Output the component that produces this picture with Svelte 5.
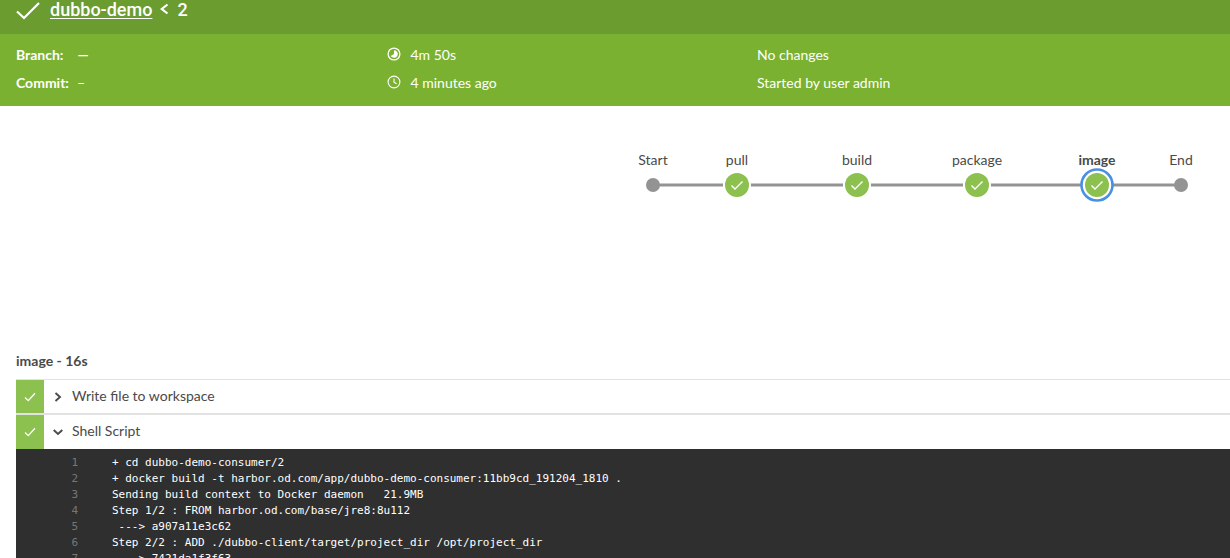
<script lang="ts">
  // pipeline graph nodes, x inside the svg canvas
  const nodes = [
    { x: 33, label: "Start", kind: "end" },
    { x: 117, label: "pull", kind: "ok" },
    { x: 237, label: "build", kind: "ok" },
    { x: 357, label: "package", kind: "ok" },
    { x: 477, label: "image", kind: "ok", selected: true },
    { x: 561, label: "End", kind: "end" },
  ];

  const log = [
    "+ cd dubbo-demo-consumer/2",
    "+ docker build -t harbor.od.com/app/dubbo-demo-consumer:11bb9cd_191204_1810 .",
    "Sending build context to Docker daemon   21.9MB",
    "Step 1/2 : FROM harbor.od.com/base/jre8:8u112",
    " ---> a907a11e3c62",
    "Step 2/2 : ADD ./dubbo-client/target/project_dir /opt/project_dir",
    " ---> 7421da1f3f63",
  ];
</script>

<div class="page">
  <header class="title">
    <svg class="title-check" width="24" height="18" viewBox="0 0 24 18">
      <path d="M1 9.5 L8 16 L23 1" fill="none" stroke="#fff" stroke-width="2.2" />
    </svg>
    <a href="#top" class="job">dubbo-demo</a>
    <svg class="title-chevron" width="9" height="12" viewBox="0 0 9 12">
      <path d="M7.5 1.5 L1.8 6 L7.5 10.5" fill="none" stroke="#fff" stroke-width="2.2" />
    </svg>
    <span class="run">2</span>
  </header>

  <section class="meta">
    <div class="meta-col">
      <div class="meta-row"><b class="branch">Branch:</b><span class="dash">—</span></div>
      <div class="meta-row"><b>Commit:</b><span>–</span></div>
    </div>
    <div class="meta-col">
      <div class="meta-row">
        <svg class="meta-icon" width="14" height="14" viewBox="0 0 14 14">
          <circle cx="7" cy="7" r="5.9" fill="none" stroke="#fff" stroke-width="1.3" />
          <path d="M7 3.2 A3.8 3.8 0 1 1 3.7 9 L7 7 Z" fill="#fff" />
        </svg>
        <span>4m 50s</span>
      </div>
      <div class="meta-row">
        <svg class="meta-icon" width="14" height="14" viewBox="0 0 14 14">
          <circle cx="7" cy="7" r="5.9" fill="none" stroke="#fff" stroke-width="1.1" />
          <path d="M7 3.4 V7.2 L9.6 8.8" fill="none" stroke="#fff" stroke-width="1.1" />
        </svg>
        <span>4 minutes ago</span>
      </div>
    </div>
    <div class="meta-col">
      <div class="meta-row">No changes</div>
      <div class="meta-row">Started by user admin</div>
    </div>
  </section>

  <section class="graph">
    <svg width="600" height="60" viewBox="0 0 600 60">
      <line x1="33" y1="35" x2="561" y2="35" stroke="#949393" stroke-width="3.2" />
      {#each nodes as n}
        <text
          x={n.x}
          y="15"
          text-anchor="middle"
          class="node-label"
          class:selected={n.selected}>{n.label}</text>
        {#if n.kind === "end"}
          <circle cx={n.x} cy="35" r="7" fill="#949393" />
        {:else}
          {#if n.selected}
            <circle cx={n.x} cy="35" r="15.5" fill="#fff" stroke="#4a90e2" stroke-width="2.6" />
          {:else}
            <circle cx={n.x} cy="35" r="14" fill="#fff" />
          {/if}
          <circle cx={n.x} cy="35" r="12" fill="#8cc04f" />
          <path
            d="M{n.x - 5.5} 35.5 L{n.x - 2} 39 L{n.x + 5.5} 31.5"
            fill="none"
            stroke="#fff"
            stroke-width="1.4" />
        {/if}
      {/each}
    </svg>
  </section>

  <section class="detail">
    <h3>image - 16s</h3>
    <div class="step first">
      <div class="step-status">
        <svg width="12" height="10" viewBox="0 0 12 10"><path d="M1 5.5 L4.3 8.6 L11 1.2" fill="none" stroke="#fff" stroke-width="1.3" /></svg>
      </div>
      <svg class="step-chevron" width="10" height="12" viewBox="0 0 10 12"><path d="M2.5 2 L7 6 L2.5 10" fill="none" stroke="#4a4a4a" stroke-width="1.9" /></svg>
      <span class="step-name">Write file to workspace</span>
    </div>
    <div class="step">
      <div class="step-status">
        <svg width="12" height="10" viewBox="0 0 12 10"><path d="M1 5.5 L4.3 8.6 L11 1.2" fill="none" stroke="#fff" stroke-width="1.3" /></svg>
      </div>
      <svg class="step-chevron" width="10" height="12" viewBox="0 0 10 12"><path d="M0.7 4 L5 8 L9.3 4" fill="none" stroke="#4a4a4a" stroke-width="1.9" /></svg>
      <span class="step-name">Shell Script</span>
    </div>
    <div class="log">
      {#each log as line, i}
        <div class="log-line"><span class="log-no">{i + 1}</span><span class="log-text">{line}</span></div>
      {/each}
    </div>
  </section>
</div>

<style>
  :global(body) {
    margin: 0;
    background: #fff;
    overflow: hidden;
  }
  .page {
    width: 1230px;
    height: 558px;
    overflow: hidden;
    font-family: Lato, "Open Sans", sans-serif;
    color: #4a4a4a;
  }
  .title {
    height: 34px;
    background: #6a9c30;
    color: #fff;
    display: flex;
    align-items: center;
    padding: 0 0 16px 16px;
    box-sizing: border-box;
    font-size: 18px;
    font-weight: 500;
  }
  .title-check {
    margin-right: 10px;
    margin-top: 4px;
  }
  .job {
    color: #fff;
    text-decoration: underline;
    text-underline-offset: 2px;
    font-family: Roboto, Lato, sans-serif;
    font-weight: 500;
  }
  .title-chevron {
    margin: 0 8px 0 8px;
  }
  .run {
    font-family: Roboto, Lato, sans-serif;
    font-weight: 500;
  }
  .meta {
    height: 72px;
    box-sizing: border-box;
    background: #7bb131;
    color: #fff;
    display: grid;
    grid-template-columns: 371px 370px 1fr;
    padding: 6px 0 0 16px;
    font-size: 14px;
  }
  .meta-row {
    height: 28px;
    display: flex;
    align-items: center;
  }
  .meta-row b {
    font-weight: 700;
    margin-right: 8px;
  }
  .meta-row b.branch {
    margin-right: 14px;
  }
  .dash {
    font-weight: 700;
  }
  .meta-icon {
    margin-right: 9.5px;
  }
  .graph {
    height: 220px;
    box-sizing: border-box;
    padding: 44px 0 0 620px;
  }
  .graph svg {
    display: block;
  }
  .node-label {
    font-family: Lato, sans-serif;
    font-size: 14px;
    fill: #4a4a4a;
  }
  .node-label.selected {
    font-weight: 700;
  }
  .detail {
    padding-left: 16px;
  }
  h3 {
    margin: 0;
    height: 53px;
    padding-top: 26px;
    box-sizing: border-box;
    font-size: 14px;
    font-weight: 700;
    line-height: 18px;
  }
  .step {
    height: 34px;
    border-top: 2px solid #e2e2e2;
    display: flex;
    align-items: center;
    font-size: 14px;
  }
  .step.first {
    height: 33px;
    border-top-width: 1px;
  }
  .step-name {
    margin-top: -3px;
  }
  .first .step-name {
    margin-top: -2px;
  }
  .step-status {
    width: 28px;
    align-self: stretch;
    background: #8cc04f;
    display: flex;
    align-items: center;
    justify-content: center;
    margin-right: 9px;
  }
  .step-chevron {
    margin-right: 9px;
  }
  .log {
    background: #2f2f2f;
    color: #fff;
    font-family: "DejaVu Sans Mono", monospace;
    font-size: 11px;
    line-height: 16px;
    padding-top: 6px;
  }
  .log-line {
    display: flex;
    white-space: pre;
  }
  .log-no {
    width: 62px;
    text-align: right;
    color: #777;
    flex: none;
  }
  .log-text {
    margin-left: 34px;
  }
</style>
